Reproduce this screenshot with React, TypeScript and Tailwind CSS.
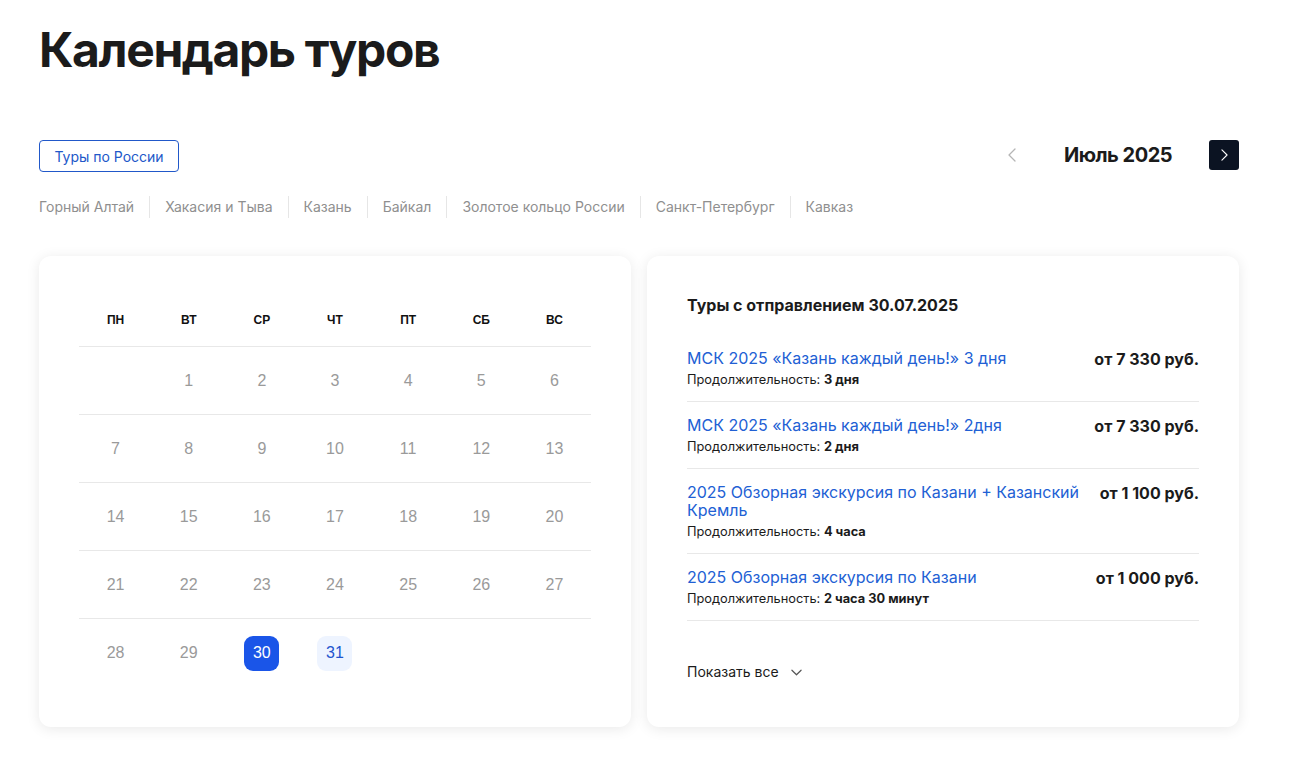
import React from 'react';

const REGIONS = ['Горный Алтай', 'Хакасия и Тыва', 'Казань', 'Байкал', 'Золотое кольцо России', 'Санкт-Петербург', 'Кавказ'];
const WEEKDAYS = ['ПН', 'ВТ', 'СР', 'ЧТ', 'ПТ', 'СБ', 'ВС'];

interface Tour {
  title: string;
  duration: string;
  price: string;
}

const TOURS: Tour[] = [
  { title: 'МСК 2025 «Казань каждый день!» 3 дня', duration: '3 дня', price: 'от 7 330 руб.' },
  { title: 'МСК 2025 «Казань каждый день!» 2дня', duration: '2 дня', price: 'от 7 330 руб.' },
  { title: '2025 Обзорная экскурсия по Казани + Казанский Кремль', duration: '4 часа', price: 'от 1 100 руб.' },
  { title: '2025 Обзорная экскурсия по Казани', duration: '2 часа 30 минут', price: 'от 1 000 руб.' },
];

// July 2025 starts on Tuesday
const weeks: (number | null)[][] = (() => {
  const cells: (number | null)[] = [null];
  for (let d = 1; d <= 31; d++) cells.push(d);
  while (cells.length % 7) cells.push(null);
  const out: (number | null)[][] = [];
  for (let i = 0; i < cells.length; i += 7) out.push(cells.slice(i, i + 7));
  return out;
})();

const Chevron = ({ dir, className }: { dir: 'left' | 'right' | 'down'; className?: string }) => {
  const d = dir === 'left' ? 'M7 1L1 7l6 6' : dir === 'right' ? 'M1 1l6 6-6 6' : 'M1 1l5 5 5-5';
  const vb = dir === 'down' ? '0 0 12 7' : '0 0 8 14';
  return (
    <svg viewBox={vb} className={className} fill="none" stroke="currentColor" strokeWidth="1.3" strokeLinecap="round" strokeLinejoin="round">
      <path d={d} />
    </svg>
  );
};

export default function App() {
  return (
    <div className="min-h-[766px] bg-white font-['Inter','Noto_Sans',sans-serif] text-[#1b1b1b]">
      <div className="w-[1200px] pl-[39px] box-content pt-[22px] pb-10">
        <h1 className="text-[48px] font-bold leading-[56px] tracking-[-1.4px] text-[#1b1b1b]">Календарь туров</h1>

        <div className="mt-[62px] flex items-start justify-between">
          <div>
            <button className="h-[32px] w-[140px] rounded-[4px] border border-[#2158c9] text-[14px] text-[#2158c9]">
              Туры по России
            </button>
            <div className="mt-[24px] flex items-center">
              {REGIONS.map((r, i) => (
                <React.Fragment key={r}>
                  {i > 0 && <span className="mx-[15px] h-[22px] w-px bg-[#e6e6e6]" />}
                  <span className="text-[14px] leading-[20px] text-[#8f8f8f]">{r}</span>
                </React.Fragment>
              ))}
            </div>
          </div>
          <div className="flex items-center">
            <button className="flex h-[30px] w-[30px] items-center justify-center text-[#b5b5b5]">
              <Chevron dir="left" className="h-[14px] w-[8px]" />
            </button>
            <div className="w-[182px] text-center text-[20px] font-bold leading-[30px] tracking-[-0.5px] text-[#1b1b1b]">Июль 2025</div>
            <button className="flex h-[30px] w-[30px] items-center justify-center rounded-[3px] bg-[#0b1322] text-white">
              <Chevron dir="right" className="h-[12px] w-[7px]" />
            </button>
          </div>
        </div>

        <div className="mt-[38px] grid grid-cols-2 gap-4">
          <div className="rounded-xl bg-white px-10 py-10 shadow-[0_2px_14px_rgba(0,0,0,0.09)] font-['Liberation_Sans','Arial',sans-serif]">
            <div className="grid h-[51px] grid-cols-7 items-center border-b border-[#e8e8e8] pb-[2px]">
              {WEEKDAYS.map((w) => (
                <div key={w} className="text-center text-[12px] font-bold text-[#111]">{w}</div>
              ))}
            </div>
            {weeks.map((wk, wi) => (
              <div key={wi} className={`grid h-[68px] grid-cols-7 items-center ${wi < weeks.length - 1 ? 'border-b border-[#e8e8e8]' : ''}`}>
                {wk.map((d, di) => (
                  <div key={di} className="flex justify-center">
                    {d === 30 ? (
                      <span className="flex h-[35px] w-[35px] items-center justify-center rounded-[9px] bg-[#1a55e8] text-[16px] text-white">30</span>
                    ) : d === 31 ? (
                      <span className="flex h-[35px] w-[35px] items-center justify-center rounded-[9px] bg-[#eef4ff] text-[16px] text-[#1f55cf]">31</span>
                    ) : (
                      <span className="text-[16px] text-[#9a9a9a]">{d ?? ''}</span>
                    )}
                  </div>
                ))}
              </div>
            ))}
          </div>

          <div className="rounded-xl bg-white px-10 pt-[39px] pb-10 shadow-[0_2px_14px_rgba(0,0,0,0.09)]">
            <h2 className="text-[16px] font-bold leading-[20px] text-[#1b1b1b]">Туры с отправлением 30.07.2025</h2>
            <div className="mt-5">
              {TOURS.map((t) => (
                <div key={t.title} className="flex items-start justify-between gap-5 border-b border-[#e8e8e8] pt-[14px] pb-[14px]">
                  <div>
                    <a className="block text-[16px] leading-[18px] text-[#2160d4]">{t.title}</a>
                    <div className="mt-[5px] text-[12.8px] leading-[15px] text-[#1b1b1b]">
                      Продолжительность: <b className="font-bold">{t.duration}</b>
                    </div>
                  </div>
                  <div className="shrink-0 whitespace-nowrap text-[16px] font-bold leading-[20px] text-[#1b1b1b]">{t.price}</div>
                </div>
              ))}
            </div>
            <button className="mt-[41px] flex items-center gap-[12px] text-[14px] leading-[20px] text-[#1b1b1b]">
              Показать все
              <Chevron dir="down" className="h-[7px] w-[11px] text-[#555]" />
            </button>
          </div>
        </div>
      </div>
    </div>
  );
}
